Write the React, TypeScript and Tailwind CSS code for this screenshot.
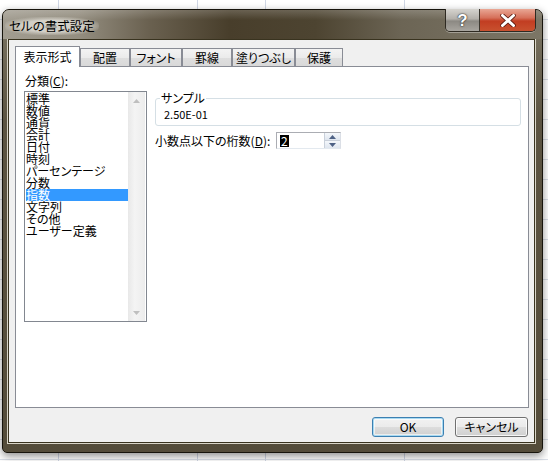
import React from "react";

const categories = [
  "標準",
  "数値",
  "通貨",
  "会計",
  "日付",
  "時刻",
  "パーセンテージ",
  "分数",
  "指数",
  "文字列",
  "その他",
  "ユーザー定義",
];

const tabs = [
  { label: "表示形式", w: "w-[65px]" },
  { label: "配置", w: "w-[50px]" },
  { label: "フォント", w: "w-[52px]" },
  { label: "罫線", w: "w-[50px]" },
  { label: "塗りつぶし", w: "w-[63px]" },
  { label: "保護", w: "w-[48px]" },
];

function Arrow({ up, color }: { up?: boolean; color: string }) {
  return (
    <svg width="7" height="4" viewBox="0 0 7 4">
      <path d={up ? "M0 4 L3.5 0 L7 4 Z" : "M0 0 L7 0 L3.5 4 Z"} fill={color} />
    </svg>
  );
}

function TitleBar() {
  return (
    <div className="relative h-[29px] rounded-t-[6px] bg-[linear-gradient(90deg,#a29d91_0%,#948e80_14%,#6a6150_27%,#483e2b_42%,#4d4431_58%,#6c6555_74%,#7c7666_100%)]">
      <div className="absolute inset-x-0 top-0 h-[10px] rounded-t-[6px] bg-[linear-gradient(180deg,rgba(255,255,255,0.18),rgba(255,255,255,0))]" />
      <div className="relative flex h-full items-center pl-[2px] pt-[2px]">
        <span className="rounded-[10px] bg-[radial-gradient(ellipse_at_center,rgba(214,211,203,0.95)_45%,rgba(214,211,203,0)_78%)] px-[4px] py-[2px] text-[12.5px] leading-[14px] text-black">
          セルの書式設定
        </span>
      </div>
      {/* caption buttons */}
      <div className="absolute right-[6px] top-[-1px] flex h-[23px] overflow-hidden rounded-b-[5px] border border-t-0 border-[#2e2a22] shadow-[0_1px_0_rgba(255,255,255,0.35)]">
        <div className="flex w-[34px] items-center justify-center border-r border-[#3a362e] bg-[linear-gradient(180deg,#d6d4cf_0%,#b3b0aa_45%,#8c8983_55%,#a8a59f_100%)]">
          <span className="font-['Liberation_Sans',sans-serif] text-[17px] font-bold leading-none text-white [text-shadow:0_0_2px_#333,0_0_1px_#000]">
            ?
          </span>
        </div>
        <div className="flex w-[55px] items-center justify-center bg-[linear-gradient(180deg,#e9a795_0%,#d6705a_40%,#c23d22_55%,#c8512f_100%)]">
          <svg width="16" height="13" viewBox="0 0 16 13">
            <path d="M2.5 1.5 L13.5 11.5 M13.5 1.5 L2.5 11.5" stroke="#5a1a10" strokeWidth="4.5" strokeLinecap="round" />
            <path d="M2.5 1.5 L13.5 11.5 M13.5 1.5 L2.5 11.5" stroke="#ffffff" strokeWidth="3" strokeLinecap="round" />
          </svg>
        </div>
      </div>
    </div>
  );
}

function CategoryList() {
  return (
    <div className="flex h-[231px] w-[123px] border border-[#828790] bg-white">
      <div className="flex w-[103px] flex-col pl-px pt-px">
        {categories.map((c) => (
          <div
            key={c}
            className={`h-[12px] whitespace-nowrap text-[12px] leading-[12px] ${
              c === "指数" ? "bg-[#3399ff] text-white" : "text-black"
            }`}
          >
            {c}
          </div>
        ))}
      </div>
      <div className="flex w-[17px] flex-col justify-between bg-[linear-gradient(90deg,#e8e8e8,#f4f4f4_40%,#ececec)]">
        <div className="flex h-[17px] items-center justify-center">
          <Arrow up color="#bfbfbf" />
        </div>
        <div className="flex h-[17px] items-center justify-center">
          <Arrow color="#bfbfbf" />
        </div>
      </div>
    </div>
  );
}

function SpinBox() {
  return (
    <div className="flex h-[17px] w-[65px] border border-[#abadb3] border-b-[#e3e9ef] border-r-[#dbdfe6] bg-white">
      <div className="flex flex-1 items-center pl-[3px]">
        <span className="bg-black px-px text-[12px] leading-[12px] text-white">2</span>
      </div>
      <div className="flex w-[16px] flex-col border-l border-[#c9d0da]">
        <div className="flex flex-1 items-center justify-center border-b border-[#c9d0da] bg-[linear-gradient(180deg,#f4f7fb,#dfe6ef)]">
          <Arrow up color="#4d6185" />
        </div>
        <div className="flex flex-1 items-center justify-center bg-[linear-gradient(180deg,#f4f7fb,#dfe6ef)]">
          <Arrow color="#4d6185" />
        </div>
      </div>
    </div>
  );
}

function DialogButton({ children, primary }: { children: React.ReactNode; primary?: boolean }) {
  return (
    <button
      className={`flex h-[20px] items-center justify-center rounded-[3px] border text-[12px] leading-[12px] text-black bg-[linear-gradient(180deg,#f2f2f2_0%,#ebebeb_49%,#dddddd_50%,#cfcfcf_100%)] ${
        primary
          ? "w-[72px] border-[#3c7fb1] shadow-[inset_0_0_0_1px_#a8daf2,inset_0_0_0_2px_rgba(255,255,255,0.6)]"
          : "w-[73px] border-[#707070] shadow-[inset_0_0_0_1px_rgba(255,255,255,0.8)]"
      }`}
    >
      {children}
    </button>
  );
}

export default function App() {
  return (
    <div className="relative h-[461px] w-[548px] overflow-hidden bg-white bg-[repeating-linear-gradient(180deg,transparent_0,transparent_19px,#dadfe8_19px,#dadfe8_20px)] font-['Noto_Sans_CJK_JP','Noto_Sans',sans-serif] [font-feature-settings:'palt']">
      {/* spreadsheet behind the dialog */}
      <div className="absolute left-[58px] top-0 h-full w-px bg-[#d0d7e5]" />
      <div className="absolute left-[197px] top-0 h-full w-px bg-[#d0d7e5]" />
      <div className="absolute left-[265px] top-0 h-full w-px bg-[#d0d7e5]" />
      <div className="absolute left-[404px] top-0 h-full w-px bg-[#d0d7e5]" />

      {/* dialog window */}
      <div className="absolute left-[2px] top-[9px] flex h-[444px] w-[541px] flex-col rounded-t-[7px] rounded-b-[5px] border border-[#17140c] bg-[linear-gradient(180deg,#7d7766_0%,#5c5442_25%,#544c3a_100%)] shadow-[0_3px_8px_rgba(0,0,0,0.45)]">
        <TitleBar />
        <div className="ml-[5px] mr-[7px] flex h-[404px] flex-col border border-[#39331f] bg-[#f0f0f0] ring-1 ring-[#d9d5c8]">
          {/* tabs */}
          <div className="flex h-[26px] items-end pl-[6px]">
            {tabs.map((t, i) =>
              i === 0 ? (
                <div
                  key={t.label}
                  className={`relative z-10 -mb-px flex h-[21px] items-center justify-center border border-b-0 border-[#898c95] bg-white text-[12px] leading-[12px] text-black ${t.w}`}
                >
                  {t.label}
                </div>
              ) : (
                <div
                  key={t.label}
                  className={`flex h-[18px] items-center justify-center border border-b-0 border-[#898c95] bg-[linear-gradient(180deg,#f3f3f3_0%,#ebebeb_50%,#dedede_51%,#d9d9d9_100%)] pt-px text-[12px] leading-[12px] text-black ${t.w}`}
                >
                  {t.label}
                </div>
              )
            )}
          </div>

          {/* tab page */}
          <div className="ml-[6px] flex h-[342px] w-[514px] border border-[#898c95] bg-white pl-[8px] pt-[8px]">
            <div className="flex flex-col">
              <div className="ml-px h-[16px] text-[12px] leading-[12px] text-black">
                分類(<span className="underline">C</span>):
              </div>
              <CategoryList />
            </div>

            <div className="ml-[8px] flex flex-col pt-[16px]">
              <div className="relative mt-[7px] h-[28px] w-[366px] rounded-[3px] border border-[#d5dfe5]">
                <span className="absolute left-[4px] top-[-7px] bg-white px-px text-[12px] leading-[12px] text-black">
                  サンプル
                </span>
                <div className="pl-[8px] pt-[10px] font-['Noto_Sans_CJK_JP',sans-serif] text-[11px] leading-[11px] text-black">
                  2.50E-01
                </div>
              </div>
              <div className="mt-[6px] flex items-center">
                <span className="w-[121px] text-[12px] leading-[12px] text-black">
                  小数点以下の桁数(<span className="underline">D</span>):
                </span>
                <SpinBox />
              </div>
            </div>
          </div>

          {/* buttons */}
          <div className="flex justify-end gap-[11px] pr-[6px] pt-[9px]">
            <DialogButton primary>OK</DialogButton>
            <DialogButton>キャンセル</DialogButton>
          </div>
        </div>
      </div>
    </div>
  );
}
